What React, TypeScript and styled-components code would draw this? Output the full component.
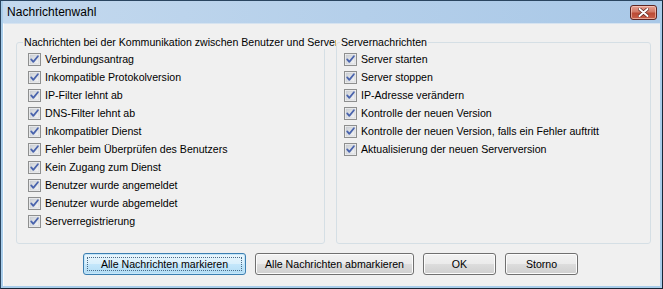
import React from 'react';
import styled, { createGlobalStyle } from 'styled-components';

const GlobalStyle = createGlobalStyle`
  html, body {
    margin: 0;
    padding: 0;
    background: #f0f0f0;
  }
  * {
    box-sizing: border-box;
  }
`;

const Window = styled.div`
  width: 663px;
  height: 289px;
  display: flex;
  flex-direction: column;
  border: 1px solid #2a4560;
  border-bottom-color: #182636;
  border-right-color: #182636;
  background: #a9cdea;
  padding: 0 2px 2px 2px;
  font-family: 'Liberation Sans', Arial, sans-serif;
  color: #000;
`;

const TitleBar = styled.div`
  height: 22px;
  display: flex;
  align-items: center;
  justify-content: space-between;
  padding: 0 3px 1px 4px;
  background: linear-gradient(to right, #c4d9ee 0%, #b4cfea 55%, #a9c8e7 100%);
`;

const Title = styled.span`
  font-size: 12px;
  letter-spacing: 0.05px;
`;

const CloseButton = styled.div`
  width: 27px;
  height: 15px;
  margin-top: 2px;
  display: flex;
  align-items: center;
  justify-content: center;
  border: 1px solid #5d2522;
  border-radius: 3px;
  background: linear-gradient(to bottom, #e8a093 0%, #d27966 45%, #bb4a35 55%, #c9604a 100%);
  box-shadow: inset 0 0 0 1px rgba(255, 220, 210, 0.55);
`;

const Client = styled.div`
  flex: 1;
  display: flex;
  flex-direction: column;
  background: #f0f0f0;
  border-top: 1px solid #d6e3f0;
  border-left: 1px solid #fbfbfb;
  padding: 11px 9px 0 12px;
`;

const Columns = styled.div`
  display: flex;
`;

const Column = styled.div<{ $width?: number }>`
  flex: ${(p) => (p.$width ? `0 0 ${p.$width}px` : '1')};
  overflow: hidden;
  padding-top: 7px;
`;

const GroupBox = styled.div<{ $padLeft: number; $marginRight?: number }>`
  position: relative;
  height: 202px;
  margin-right: ${(p) => p.$marginRight ?? 0}px;
  border: 1px solid #d5dfe5;
  border-radius: 3px;
  padding: 7px 0 0 ${(p) => p.$padLeft}px;
`;

const Legend = styled.span<{ $left: number }>`
  position: absolute;
  top: -7px;
  left: ${(p) => p.$left}px;
  padding: 0 1px;
  background: #f0f0f0;
  font-size: 10.6px;
  line-height: 13px;
  white-space: nowrap;
`;

const CheckRow = styled.label`
  height: 18px;
  display: flex;
  align-items: center;
  gap: 4px;
  font-size: 10.6px;
  white-space: nowrap;
`;

const ButtonRow = styled.div`
  display: flex;
  gap: 9px;
  margin-top: 9px;
  padding-left: 67px;
`;

const Button = styled.button<{ $width: number; $default?: boolean }>`
  width: ${(p) => p.$width}px;
  height: 22px;
  padding: 0;
  position: relative;
  font-family: 'Liberation Sans', Arial, sans-serif;
  font-size: 10.6px;
  color: #000;
  border-radius: 3px;
  border: 1px solid ${(p) => (p.$default ? '#3c7fb1' : '#707070')};
  background: ${(p) =>
    p.$default
      ? 'linear-gradient(to bottom, #eaf6fd 0%, #d9f0fc 50%, #c4e7fb 51%, #b2dcf4 100%)'
      : 'linear-gradient(to bottom, #f2f2f2 0%, #ebebeb 50%, #dddddd 51%, #cfcfcf 100%)'};
  box-shadow: inset 0 0 0 1px ${(p) => (p.$default ? '#c5e6f9' : '#fcfcfc')};
`;

const FocusRing = styled.span`
  position: absolute;
  inset: 3px;
  border: 1px dotted #4a6a86;
`;

const CheckBox: React.FC = () => (
  <svg width="13" height="13" viewBox="0 0 13 13">
    <defs>
      <linearGradient id="cbg" x1="0" y1="0" x2="1" y2="1">
        <stop offset="0" stopColor="#cbcfd5" />
        <stop offset="1" stopColor="#f6f6f6" />
      </linearGradient>
    </defs>
    <rect x="0.5" y="0.5" width="12" height="12" fill="#f4f4f4" stroke="#8e8f8f" />
    <rect x="2" y="2" width="9" height="9" fill="url(#cbg)" stroke="#c6c9cf" strokeWidth="0.6" />
    <path d="M3.2 6.4 L5.3 8.9 L9.9 3.2" fill="none" stroke="#4a64ad" strokeWidth="1.8" strokeLinecap="round" strokeLinejoin="round" />
  </svg>
);

const CloseGlyph: React.FC = () => (
  <svg width="11" height="9" viewBox="0 0 11 9">
    <path d="M1.5 1 L9.5 8 M9.5 1 L1.5 8" stroke="#5a2520" strokeWidth="3.4" strokeLinecap="round" />
    <path d="M1.5 1 L9.5 8 M9.5 1 L1.5 8" stroke="#ffffff" strokeWidth="2" strokeLinecap="round" />
  </svg>
);

const userMessages = [
  'Verbindungsantrag',
  'Inkompatible Protokolversion',
  'IP-Filter lehnt ab',
  'DNS-Filter lehnt ab',
  'Inkompatibler Dienst',
  'Fehler beim Überprüfen des Benutzers',
  'Kein Zugang zum Dienst',
  'Benutzer wurde angemeldet',
  'Benutzer wurde abgemeldet',
  'Serverregistrierung',
];

const serverMessages = [
  'Server starten',
  'Server stoppen',
  'IP-Adresse verändern',
  'Kontrolle der neuen Version',
  'Kontrolle der neuen Version, falls ein Fehler auftritt',
  'Aktualisierung der neuen Serverversion',
];

const App: React.FC = () => {
  return (
    <>
      <GlobalStyle />
      <Window>
        <TitleBar>
          <Title>Nachrichtenwahl</Title>
          <CloseButton>
            <CloseGlyph />
          </CloseButton>
        </TitleBar>
        <Client>
          <Columns>
            <Column $width={320}>
              <GroupBox $padLeft={11} $marginRight={11}>
                <Legend $left={6}>
                  Nachrichten bei der Kommunikation zwischen Benutzer und Server
                </Legend>
                {userMessages.map((m) => (
                  <CheckRow key={m}>
                    <CheckBox />
                    {m}
                  </CheckRow>
                ))}
              </GroupBox>
            </Column>
            <Column>
              <GroupBox $padLeft={7}>
                <Legend $left={3}>Servernachrichten</Legend>
                {serverMessages.map((m) => (
                  <CheckRow key={m}>
                    <CheckBox />
                    {m}
                  </CheckRow>
                ))}
              </GroupBox>
            </Column>
          </Columns>
          <ButtonRow>
            <Button $width={163} $default>
              <FocusRing />
              Alle Nachrichten markieren
            </Button>
            <Button $width={159}>Alle Nachrichten abmarkieren</Button>
            <Button $width={73}>OK</Button>
            <Button $width={73}>Storno</Button>
          </ButtonRow>
        </Client>
      </Window>
    </>
  );
};

export default App;
